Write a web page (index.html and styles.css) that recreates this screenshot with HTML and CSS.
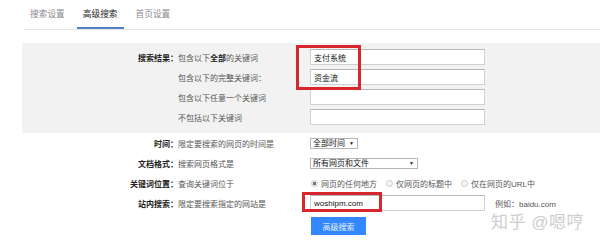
FILE: index.html
```html
<!DOCTYPE html>
<html lang="zh-CN">
<head>
    <meta charset="UTF-8">
    <title>高级搜索</title>
    <link rel="stylesheet" href="styles.css">
</head>
<body>
    <div class="pagina">
        <div class="tabs">
            <span class="tab">搜索设置</span>
            <span class="tab activa">高级搜索</span>
            <span class="tab">首页设置</span>
        </div>

        <div class="panel">
            <div class="fila">
                <span class="etiqueta">搜索结果：</span>
                <span class="desc">包含以下<b>全部</b>的关键词</span>
                <span class="campo"><input type="text" value="支付系统"></span>
            </div>
            <div class="fila">
                <span class="etiqueta"></span>
                <span class="desc">包含以下的完整关键词：</span>
                <span class="campo"><input type="text" value="资金流"></span>
            </div>
            <div class="fila">
                <span class="etiqueta"></span>
                <span class="desc">包含以下任意一个关键词</span>
                <span class="campo"><input type="text"></span>
            </div>
            <div class="fila">
                <span class="etiqueta"></span>
                <span class="desc">不包括以下关键词</span>
                <span class="campo"><input type="text"></span>
            </div>
        </div>

        <div class="opciones">
            <div class="fila">
                <span class="etiqueta">时间：</span>
                <span class="desc">限定要搜索的网页的时间是</span>
                <span class="campo"><span class="select corto">全部时间<i>▼</i></span></span>
            </div>
            <div class="fila">
                <span class="etiqueta">文档格式：</span>
                <span class="desc">搜索网页格式是</span>
                <span class="campo"><span class="select largo">所有网页和文件<i>▼</i></span></span>
            </div>
            <div class="fila">
                <span class="etiqueta">关键词位置：</span>
                <span class="desc">查询关键词位于</span>
                <span class="campo radios">
                    <label><span class="radio marcado"></span>网页的任何地方</label>
                    <label><span class="radio"></span>仅网页的标题中</label>
                    <label><span class="radio"></span>仅在网页的URL中</label>
                </span>
            </div>
            <div class="fila">
                <span class="etiqueta">站内搜索：</span>
                <span class="desc">限定要搜索指定的网站是</span>
                <span class="campo"><input type="text" value="woshipm.com"></span>
                <span class="ejemplo">例如：baidu.com</span>
            </div>
            <div class="fila boton-fila">
                <span class="etiqueta"></span>
                <span class="desc"></span>
                <span class="campo"><button class="boton-buscar">高级搜索</button></span>
            </div>
        </div>

        <div class="marca marca-1"></div>
        <div class="marca marca-2"></div>
        <div class="sello">知乎 @嗯哼</div>
    </div>
</body>
</html>
```

FILE: styles.css
```css
body {
    margin: 0;
    background-color: #ffffff;
    font-family: "Liberation Sans", "Noto Sans CJK SC", sans-serif;
    font-size: 8px;
    color: #555;
}

.pagina {
    position: relative;
    width: 600px;
    height: 246px;
    overflow: hidden;
}

.tabs {
    display: flex;
    gap: 6px;
    margin-left: 24px;
    height: 30px;
    border-bottom: 1px solid #e6e6e6;
    box-sizing: border-box;
}

.tab {
    padding: 0 6px;
    line-height: 28px;
    font-size: 8.7px;
    color: #8a8a8a;
}

.tab.activa {
    color: #222;
    border-bottom: 2px solid #4f7fc4;
    height: 29px;
    box-sizing: border-box;
}

.panel {
    margin: 13px 0 0 22px;
    padding: 4px 0 6px;
    background-color: #f2f2f2;
}

.opciones {
    margin-left: 22px;
}

.fila {
    display: grid;
    grid-template-columns: 156px 132px 175px auto;
    align-items: center;
    height: 20px;
}

.etiqueta {
    text-align: right;
    color: #222;
    font-weight: bold;
}

.desc b {
    color: #222;
}

.campo input {
    display: block;
    width: 175px;
    height: 16px;
    box-sizing: border-box;
    margin: 0;
    padding: 0 3px;
    border: 1px solid #d0d0d0;
    border-top-color: #b8b8b8;
    background-color: #fff;
    font-family: inherit;
    font-size: 8px;
    color: #111;
    outline: none;
}

.select {
    display: flex;
    justify-content: space-between;
    align-items: center;
    height: 11px;
    box-sizing: border-box;
    padding: 0 3px 0 2px;
    border: 1px solid #b5b5b5;
    background-color: #fff;
    color: #111;
    line-height: 9px;
}

.select i {
    font-style: normal;
    font-size: 5px;
    color: #111;
}

.select.corto {
    width: 48px;
}

.select.largo {
    width: 108px;
}

.radios {
    display: flex;
    gap: 9px;
    white-space: nowrap;
    margin-left: 1px;
}

.radios label {
    display: flex;
    align-items: center;
    gap: 3px;
}

.radio {
    display: inline-block;
    width: 5px;
    height: 5px;
    border: 1px solid #ccc;
    border-radius: 50%;
    background-color: #f4f4f4;
}

.radio.marcado {
    background: radial-gradient(circle, #777 0 1.5px, #eee 2px);
}

.ejemplo {
    padding-left: 10px;
    white-space: nowrap;
}

.boton-fila {
    margin-top: 4px;
    height: 18px;
}

.boton-buscar {
    display: block;
    width: 55px;
    height: 18px;
    margin-left: 1px;
    padding: 0;
    border: none;
    background-color: #3388ff;
    color: #e8f0ff;
    font-family: inherit;
    font-size: 8px;
}

.marca {
    position: absolute;
    border: 3px solid #d7262e;
    box-sizing: border-box;
}

.marca-1 {
    left: 296px;
    top: 45px;
    width: 65px;
    height: 45px;
}

.marca-2 {
    left: 302px;
    top: 192px;
    width: 80px;
    height: 20px;
}

.sello {
    position: absolute;
    left: 491px;
    top: 208px;
    font-size: 17px;
    color: #cdcdcd;
    letter-spacing: 0.5px;
    white-space: nowrap;
}
```
